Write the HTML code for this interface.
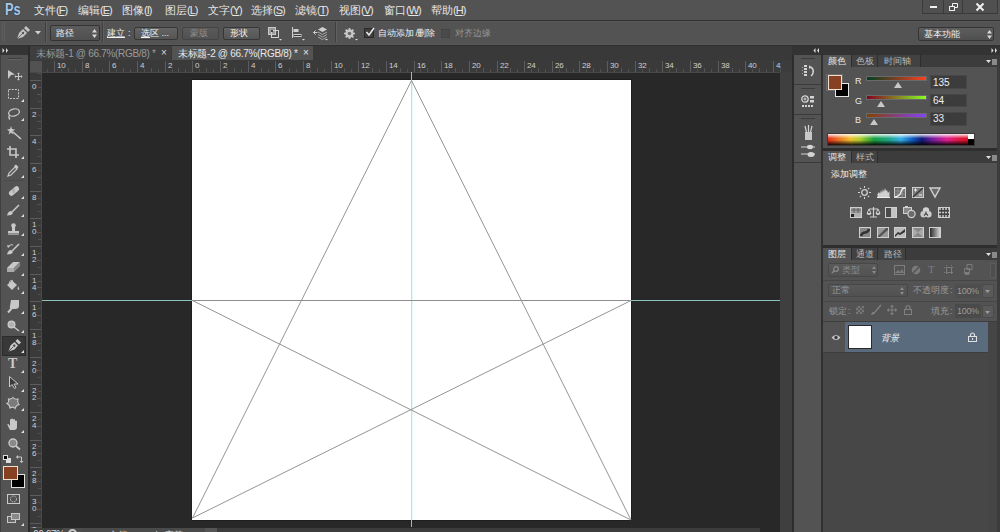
<!DOCTYPE html>
<html><head><meta charset="utf-8">
<style>
*{margin:0;padding:0;box-sizing:border-box}
html,body{width:1000px;height:532px;overflow:hidden;background:#535353;font-family:"Liberation Sans",sans-serif;color:#ddd}
.a{position:absolute}
.t{position:absolute;white-space:nowrap;font-size:11px;line-height:12px}
.m{position:absolute;white-space:nowrap;font-size:11px;line-height:12px;top:4px;color:#e6e6e6}
.o{position:absolute;white-space:nowrap;font-size:9px;line-height:12px;top:27px}
.p{position:absolute;white-space:nowrap;font-size:9px;line-height:12px}
.m i{font-style:normal;letter-spacing:-1px}
svg{position:absolute;overflow:visible}
.rl{font-size:8px;line-height:8px;color:#d0d0d0;letter-spacing:-0.3px}
.rv{font-size:8px;line-height:7px;color:#d0d0d0}
</style></head><body>
<!-- ============ MENU BAR ============ -->
<div class="a" style="left:0;top:0;width:1000px;height:19px;background:#535353"></div>
<div class="a" style="left:0;top:20px;width:1000px;height:1px;background:#303030"></div>
<div class="a" style="left:0;top:21px;width:1000px;height:1px;background:#5a5a5a"></div>
<div class="t" style="left:5px;top:2px;font-size:16px;line-height:16px;font-weight:bold;color:#aac8e6;transform:scaleX(0.8);transform-origin:0 0;text-shadow:0 0 1px #1d3550,0 0 1px #1d3550">Ps</div>
<div class="m" style="left:34px">文件<i>(<u>F</u>)</i></div>
<div class="m" style="left:78px">编辑<i>(<u>E</u>)</i></div>
<div class="m" style="left:122px">图像<i>(<u>I</u>)</i></div>
<div class="m" style="left:165px">图层<i>(<u>L</u>)</i></div>
<div class="m" style="left:208px">文字<i>(<u>Y</u>)</i></div>
<div class="m" style="left:251px">选择<i>(<u>S</u>)</i></div>
<div class="m" style="left:295px">滤镜<i>(<u>T</u>)</i></div>
<div class="m" style="left:339px">视图<i>(<u>V</u>)</i></div>
<div class="m" style="left:384px">窗口<i>(<u>W</u>)</i></div>
<div class="m" style="left:431px">帮助<i>(<u>H</u>)</i></div>
<!-- window controls -->
<div class="a" style="left:922px;top:0;width:76px;height:14px;background:#505050;border:1px solid #3a3a3a;border-top:0"></div>
<div class="a" style="left:943px;top:0;width:1px;height:13px;background:#3a3a3a"></div>
<div class="a" style="left:962px;top:0;width:1px;height:13px;background:#3a3a3a"></div>
<div class="a" style="left:930px;top:6px;width:7px;height:2px;background:#f0f0f0"></div>
<svg style="left:949px;top:3px" width="10" height="9"><path d="M3.5 0.5h5v4h-5z M0.5 3.5h5v4h-5z" fill="none" stroke="#f0f0f0" stroke-width="1"/><rect x="1" y="4" width="4" height="3" fill="#505050"/><path d="M0.5 3.5h5v4h-5z" fill="none" stroke="#f0f0f0"/></svg>
<svg style="left:976px;top:3px" width="8" height="8"><path d="M0.5 0.5L7.5 7.5M7.5 0.5L0.5 7.5" stroke="#f0f0f0" stroke-width="2"/></svg>

<!-- ============ OPTIONS BAR ============ -->
<div class="a" style="left:0;top:22px;width:1000px;height:23px;background:#535353"></div>
<div class="a" style="left:0;top:44px;width:1000px;height:1px;background:#585858"></div>
<div class="a" style="left:0;top:45px;width:1000px;height:1px;background:#2e2e2e"></div>
<div class="a" style="left:2px;top:23px;width:1px;height:18px;background:#5e5e5e"></div>
<div class="a" style="left:4px;top:23px;width:1px;height:18px;background:#5e5e5e"></div>
<!-- pen icon -->
<svg style="left:16px;top:26px" width="14" height="14" viewBox="0 0 14 14"><path d="M1 13 L3 7 L7 3 L11 7 L7 11 Z" fill="#c4c4c4"/><path d="M8 2 L10 0 L14 4 L12 6 Z" fill="#c4c4c4"/><circle cx="7" cy="7" r="1.2" fill="#535353"/><path d="M1 13 L6 8" stroke="#535353" stroke-width="0.8"/></svg>
<svg style="left:35px;top:31px" width="6" height="4"><path d="M0 0H6L3 3.5Z" fill="#d0d0d0"/></svg>
<div class="a" style="left:45px;top:22px;width:1px;height:20px;background:#3e3e3e"></div>
<div class="a" style="left:46px;top:22px;width:1px;height:20px;background:#606060"></div>
<!-- dropdown 路径 -->
<div class="a" style="left:50px;top:25px;width:50px;height:16px;background:linear-gradient(#5c5c5c,#4f4f4f);border:1px solid #333;border-radius:2px"></div>
<div class="o" style="left:56px;top:27px;color:#f0f0f0">路径</div>
<svg style="left:92px;top:29px" width="5" height="9"><path d="M0 3.5L2.5 0L5 3.5Z M0 5.5L2.5 9L5 5.5Z" fill="#d8d8d8"/></svg>
<div class="a" style="left:102px;top:22px;width:1px;height:20px;background:#3e3e3e"></div>
<div class="a" style="left:103px;top:22px;width:1px;height:20px;background:#606060"></div>
<div class="o" style="left:107px;top:27px;color:#f0f0f0"><u>建立</u><span style="margin-left:3px">:</span></div>
<div class="a" style="left:134px;top:27px;width:44px;height:13px;background:linear-gradient(#646464,#555);border:1px solid #363636;border-radius:2px"></div>
<div class="o" style="left:141px;top:27px;color:#f0f0f0"><u>选</u>区 ...</div>
<div class="a" style="left:182px;top:27px;width:37px;height:13px;background:linear-gradient(#5a5a5a,#505050);border:1px solid #444;border-radius:2px"></div>
<div class="o" style="left:190px;top:27px;color:#8e8e8e">蒙版</div>
<div class="a" style="left:223px;top:27px;width:37px;height:13px;background:linear-gradient(#646464,#555);border:1px solid #363636;border-radius:2px"></div>
<div class="o" style="left:230px;top:27px;color:#f0f0f0">形状</div>
<!-- path ops icons -->
<svg style="left:268px;top:27px" width="14" height="14"><rect x="0.5" y="0.5" width="7" height="7" fill="#9a9a9a" stroke="#c8c8c8"/><rect x="3.5" y="3.5" width="7" height="7" fill="none" stroke="#d0d0d0"/><rect x="3" y="3" width="2" height="2" fill="#444"/><path d="M11 12h3l-1.5 1.5z" fill="#ddd"/></svg>
<svg style="left:291px;top:27px" width="14" height="14"><path d="M1.5 0v11" stroke="#cfcfcf"/><rect x="2.5" y="2" width="5" height="3" fill="#cfcfcf"/><rect x="2.5" y="7" width="8" height="3" fill="#cfcfcf"/><path d="M3 8.5h7" stroke="#333"/><path d="M11 12h3l-1.5 1.5z" fill="#ddd"/></svg>
<svg style="left:313px;top:26px" width="15" height="15"><path d="M9.5 1L14 3.5L9.5 6L5 3.5Z" fill="#cfcfcf"/><path d="M5 6L9.5 8.5L14 6M5 8.5L9.5 11L14 8.5M5 11L9.5 13.5L14 11" stroke="#a8a8a8" fill="none"/><path d="M0.5 6.5h4M2.5 4.5l-2 2 2 2" stroke="#d0d0d0" fill="none"/><path d="M12 13h3l-1.5 1.5z" fill="#ddd"/></svg>
<div class="a" style="left:335px;top:22px;width:1px;height:20px;background:#3e3e3e"></div>
<div class="a" style="left:336px;top:22px;width:1px;height:20px;background:#606060"></div>
<!-- gear -->
<svg style="left:344px;top:28px" width="14" height="13" viewBox="0 0 14 13"><circle cx="5.5" cy="5.5" r="4.2" fill="#c8c8c8"/><path d="M5.5 0v11M0 5.5h11M1.6 1.6l7.8 7.8M9.4 1.6l-7.8 7.8" stroke="#c8c8c8" stroke-width="1.6"/><circle cx="5.5" cy="5.5" r="1.8" fill="#6a6a6a"/><path d="M11 11h3l-1.5 1.5z" fill="#ddd"/></svg>
<!-- checkbox checked -->
<div class="a" style="left:364px;top:28px;width:10px;height:10px;background:#3e3e3e;border:1px solid #2a2a2a"></div>
<svg style="left:365px;top:27px" width="10" height="10"><path d="M1.5 5L4 8L9 1" stroke="#e8e8e8" stroke-width="1.6" fill="none"/></svg>
<div class="o" style="left:378px;top:27px;color:#f0f0f0">自动添加<span style="letter-spacing:-1px"> /</span>删除</div>
<div class="a" style="left:441px;top:29px;width:9px;height:9px;background:#4a4a4a;border:1px solid #444"></div>
<div class="o" style="left:455px;top:27px;color:#969696">对齐边缘</div>
<!-- workspace dropdown -->
<div class="a" style="left:918px;top:27px;width:76px;height:14px;background:linear-gradient(#5e5e5e,#4f4f4f);border:1px solid #343434;border-radius:2px"></div>
<div class="o" style="left:924px;top:28px;color:#f0f0f0">基本功能</div>
<svg style="left:987px;top:30px" width="5" height="9"><path d="M0 3.5L2.5 0L5 3.5Z M0 5.5L2.5 9L5 5.5Z" fill="#d8d8d8"/></svg>

<!-- ============ ROW 45..60 ============ -->
<div class="a" style="left:0;top:46px;width:1000px;height:14px;background:#393939"></div>

<!-- ============ TOOLBAR ============ -->
<div class="a" style="left:0;top:46px;width:28px;height:9px;background:#343434"></div>
<svg style="left:2px;top:48px" width="7" height="5"><path d="M0.5 0L2.5 2.5L0.5 5Z M4 0L6 2.5L4 5Z" fill="#e0e0e0"/></svg>
<div class="a" style="left:0;top:55px;width:28px;height:477px;background:#535353;border-left:1px solid #404040"></div>
<div class="a" style="left:28px;top:46px;width:2px;height:486px;background:#2b2b2b"></div>
<div class="a" style="left:8px;top:58px;width:14px;height:1px;background:#3c3c3c"></div>
<div class="a" style="left:8px;top:59px;width:14px;height:1px;background:#656565"></div>
<svg style="left:8px;top:70px" width="15" height="10" viewBox="0 0 15 10"><path d="M0 0L7 4.5L3 5L0 9Z" fill="#c8c8c8"/><path d="M7 6.5h7M10.5 3v7" stroke="#c8c8c8"/><path d="M10.5 2.5l-1.5 1.5h3zM10.5 10.5l-1.5-1.5h3zM6.5 6.5l1.5-1.5v3zM14.5 6.5l-1.5-1.5v3z" fill="#c8c8c8"/></svg>
<svg style="left:8px;top:89px" width="11" height="10" viewBox="0 0 11 10"><rect x="0.5" y="0.5" width="10" height="9" fill="none" stroke="#c8c8c8" stroke-dasharray="2 1.2"/></svg>
<svg style="left:21px;top:99px" width="3" height="3"><path d="M3 0V3H0Z" fill="#e0e0e0"/></svg>
<svg style="left:7px;top:108px" width="13" height="12" viewBox="0 0 13 12"><ellipse cx="7" cy="4.5" rx="5.5" ry="3.5" fill="none" stroke="#c8c8c8" stroke-width="1.3" transform="rotate(-15 7 4.5)"/><path d="M2.5 7Q1 10 3 11.5" stroke="#c8c8c8" fill="none" stroke-width="1.2"/></svg>
<svg style="left:21px;top:118px" width="3" height="3"><path d="M3 0V3H0Z" fill="#e0e0e0"/></svg>
<svg style="left:7px;top:126px" width="16" height="14" viewBox="0 0 16 14"><path d="M4 0L5 3L8 3.5L5.5 5.5L6.5 8.5L4 6.8L1.5 8.5L2.5 5.5L0 3.5L3 3Z" fill="#c8c8c8"/><path d="M6 6L14 13" stroke="#c8c8c8" stroke-width="1.6"/></svg>
<svg style="left:7px;top:146px" width="13" height="12" viewBox="0 0 13 12"><path d="M3 0V9H12M0 3H9V12" stroke="#c8c8c8" stroke-width="1.6" fill="none"/></svg>
<svg style="left:21px;top:156px" width="3" height="3"><path d="M3 0V3H0Z" fill="#e0e0e0"/></svg>
<svg style="left:7px;top:164px" width="12" height="13" viewBox="0 0 12 13"><path d="M1 12L2 9L8 3L10 5L4 11Z" fill="none" stroke="#c8c8c8" stroke-width="1.2"/><path d="M7 2L9 0.5L11.5 3L10 5Z" fill="#c8c8c8"/></svg>
<svg style="left:21px;top:175px" width="3" height="3"><path d="M3 0V3H0Z" fill="#e0e0e0"/></svg>
<div class="a" style="left:4px;top:180px;width:21px;height:1px;background:#4a4a4a"></div>
<svg style="left:7px;top:185px" width="13" height="12" viewBox="0 0 13 12"><rect x="1" y="3.5" width="12" height="5" rx="2.5" fill="#c8c8c8" transform="rotate(-40 7 6)"/><path d="M5 5h3M5 7h3" stroke="#888" stroke-width="0.8"/></svg>
<svg style="left:21px;top:196px" width="3" height="3"><path d="M3 0V3H0Z" fill="#e0e0e0"/></svg>
<svg style="left:7px;top:204px" width="13" height="12" viewBox="0 0 13 12"><path d="M5 8L12 1" stroke="#c8c8c8" stroke-width="1.6"/><path d="M0 11.5Q1 7 4 7L6 9Q5 11.5 0 11.5Z" fill="#c8c8c8"/></svg>
<svg style="left:21px;top:214px" width="3" height="3"><path d="M3 0V3H0Z" fill="#e0e0e0"/></svg>
<svg style="left:7px;top:223px" width="13" height="12" viewBox="0 0 13 12"><circle cx="6.5" cy="2.5" r="2.3" fill="#c8c8c8"/><rect x="5" y="4" width="3" height="4" fill="#c8c8c8"/><rect x="1" y="8" width="11" height="2.5" fill="#c8c8c8"/><rect x="1" y="11" width="11" height="1" fill="#999"/></svg>
<svg style="left:21px;top:233px" width="3" height="3"><path d="M3 0V3H0Z" fill="#e0e0e0"/></svg>
<svg style="left:7px;top:243px" width="13" height="12" viewBox="0 0 13 12"><path d="M5 8L12 1" stroke="#c8c8c8" stroke-width="1.6"/><path d="M0 11.5Q1 7 4 7L6 9Q5 11.5 0 11.5Z" fill="#c8c8c8"/><path d="M1 4Q3 1 6 2" stroke="#c8c8c8" fill="none" stroke-width="1.2"/><path d="M0 2L1 5L3 3Z" fill="#c8c8c8"/></svg>
<svg style="left:21px;top:253px" width="3" height="3"><path d="M3 0V3H0Z" fill="#e0e0e0"/></svg>
<svg style="left:7px;top:262px" width="13" height="11" viewBox="0 0 13 11"><path d="M0 6L6 0H13L7 6Z" fill="#c8c8c8"/><path d="M0 6H7V10H0Z" fill="#aaa"/><path d="M7 6L13 0V4L7 10Z" fill="#8a8a8a"/></svg>
<svg style="left:21px;top:273px" width="3" height="3"><path d="M3 0V3H0Z" fill="#e0e0e0"/></svg>
<svg style="left:6px;top:280px" width="16" height="12" viewBox="0 0 16 12"><path d="M1 5L6 0.5L11 5L6 10Z" fill="#c8c8c8"/><path d="M3.5 3Q4 -1 7 1" stroke="#c8c8c8" fill="none"/><path d="M12 6Q14 9 12.5 10Q11 9 12 6Z" fill="#c8c8c8"/></svg>
<svg style="left:21px;top:291px" width="3" height="3"><path d="M3 0V3H0Z" fill="#e0e0e0"/></svg>
<svg style="left:7px;top:300px" width="13" height="13" viewBox="0 0 13 13"><path d="M4 0H12V6Q12 9 8 9H5Q2 9 3 6Z" fill="#c8c8c8"/><path d="M5 8L1 12.5" stroke="#c8c8c8" stroke-width="2"/></svg>
<svg style="left:21px;top:311px" width="3" height="3"><path d="M3 0V3H0Z" fill="#e0e0e0"/></svg>
<svg style="left:7px;top:320px" width="14" height="12" viewBox="0 0 14 12"><circle cx="4.5" cy="4.5" r="4" fill="#c8c8c8"/><circle cx="4.5" cy="4.5" r="2.5" fill="#b0b0b0"/><path d="M7 7L12 11" stroke="#c8c8c8" stroke-width="1.5"/></svg>
<svg style="left:21px;top:330px" width="3" height="3"><path d="M3 0V3H0Z" fill="#e0e0e0"/></svg>
<div class="a" style="left:2px;top:336px;width:24px;height:20px;background:#383838;border:1px solid #2c2c2c"></div>
<svg style="left:8px;top:339px" width="13" height="13" viewBox="0 0 13 13"><path d="M0.5 12.5L2.5 6.5L6.5 3L10 6.5L6.5 10.5Z" fill="#c8c8c8"/><path d="M7.5 2L9.5 0L13 3.5L11 5.5Z" fill="#c8c8c8"/><circle cx="6.3" cy="6.7" r="1.1" fill="#383838"/><path d="M0.8 12.2L5.5 7.5" stroke="#383838" stroke-width="0.8"/></svg>
<svg style="left:21px;top:350px" width="3" height="3"><path d="M3 0V3H0Z" fill="#e0e0e0"/></svg>
<div class="t" style="left:8px;top:357px;font-size:14px;line-height:14px;color:#c8c8c8;font-family:'Liberation Serif',serif;font-weight:bold">T</div>
<svg style="left:21px;top:370px" width="3" height="3"><path d="M3 0V3H0Z" fill="#e0e0e0"/></svg>
<svg style="left:9px;top:376px" width="10" height="13" viewBox="0 0 10 13"><path d="M0.5 0.5V11L3 8.5L5.5 12.5L7 11.5L5 8H9Z" fill="#3a3a3a" stroke="#c8c8c8"/></svg>
<svg style="left:21px;top:389px" width="3" height="3"><path d="M3 0V3H0Z" fill="#e0e0e0"/></svg>
<svg style="left:6px;top:397px" width="14" height="12" viewBox="0 0 14 12"><path d="M7 0.5Q9 3 12 2Q11 5 13 7.5Q10 8 9 11.5Q7 9 4 11Q4 8 1 6.5Q3.5 5 2.5 2Q5.5 2.5 7 0.5Z" fill="#7a7a7a" stroke="#c8c8c8" stroke-width="1.1"/></svg>
<svg style="left:21px;top:408px" width="3" height="3"><path d="M3 0V3H0Z" fill="#e0e0e0"/></svg>
<svg style="left:7px;top:418px" width="13" height="13" viewBox="0 0 13 13"><path d="M3 12L0.5 7Q0 5.5 1.5 6L3 8V2Q3 1 4 1.2V6V1Q5 -0.2 6 1V6V1.5Q7 0.5 8 1.5V6.5V3Q9 2 10 3V9Q10 12 7 12Z" fill="#c8c8c8"/></svg>
<svg style="left:21px;top:430px" width="3" height="3"><path d="M3 0V3H0Z" fill="#e0e0e0"/></svg>
<svg style="left:8px;top:438px" width="13" height="12" viewBox="0 0 13 12"><circle cx="5" cy="5" r="4" fill="#8a8a8a" stroke="#c8c8c8" stroke-width="1.4"/><path d="M8 8L12 11.5" stroke="#c8c8c8" stroke-width="1.8"/></svg>
<svg style="left:3px;top:455px" width="8" height="8" viewBox="0 0 8 8"><rect x="3" y="3" width="5" height="5" fill="#ddd"/><rect x="0.5" y="0.5" width="4" height="4" fill="#000" stroke="#ddd"/></svg>
<svg style="left:16px;top:455px" width="8" height="8" viewBox="0 0 8 8"><path d="M1 2H5.5V6.5" stroke="#c8c8c8" fill="none"/><path d="M0 2L2 0V4ZM5.5 8L3.5 6H7.5Z" fill="#c8c8c8"/></svg>
<div class="a" style="left:11px;top:474px;width:14px;height:14px;background:#000;border:1px solid #e0e0e0"></div>
<div class="a" style="left:3px;top:466px;width:15px;height:14px;background:#874021;border:1px solid #f0e0d0"></div>
<svg style="left:7px;top:494px" width="13" height="10" viewBox="0 0 13 10"><rect x="0.5" y="0.5" width="12" height="9" fill="none" stroke="#c8c8c8"/><circle cx="6.5" cy="5" r="3" fill="none" stroke="#c8c8c8" stroke-dasharray="1.5 1"/></svg>
<svg style="left:7px;top:513px" width="14" height="10" viewBox="0 0 14 10"><rect x="0.5" y="3.5" width="8" height="6" fill="#666" stroke="#c8c8c8"/><rect x="4.5" y="0.5" width="8" height="6" fill="#888" stroke="#c8c8c8"/></svg>
<svg style="left:21px;top:523px" width="3" height="3"><path d="M3 0V3H0Z" fill="#e0e0e0"/></svg>

<!-- ============ DOC TABS ============ -->
<div class="a" style="left:30px;top:46px;width:141px;height:14px;background:#3e3e3e"></div>
<div class="t" style="left:36px;top:48px;color:#9a9a9a;font-size:10px;letter-spacing:-0.3px">未标题-1 @ 66.7%(RGB/8) *</div>
<div class="t" style="left:161px;top:47px;color:#d8d8d8;font-size:10px">×</div>
<div class="a" style="left:172px;top:46px;width:141px;height:14px;background:#535353"></div>
<div class="t" style="left:178px;top:48px;color:#e8e8e8;font-size:10px;letter-spacing:-0.3px">未标题-2 @ 66.7%(RGB/8) *</div>
<div class="t" style="left:303px;top:47px;color:#e8e8e8;font-size:10px">×</div>

<!-- ============ RULERS ============ -->
<div class="a" style="left:30px;top:60px;width:751px;height:12px;background:#3a3a3a"></div>
<div class="a" style="left:30px;top:60px;width:12px;height:467px;background:#3a3a3a"></div>
<div class="a" style="left:30px;top:61px;width:12px;height:11px;background:#525252"></div>
<svg style="left:0;top:0" width="1000" height="532"><line x1="47.5" y1="69" x2="47.5" y2="72" stroke="#505050"/><line x1="54.5" y1="61" x2="54.5" y2="72" stroke="#5c5c5c"/><line x1="61.5" y1="69" x2="61.5" y2="72" stroke="#505050"/><line x1="68.5" y1="68" x2="68.5" y2="72" stroke="#555555"/><line x1="75.5" y1="69" x2="75.5" y2="72" stroke="#505050"/><line x1="82.5" y1="61" x2="82.5" y2="72" stroke="#5c5c5c"/><line x1="89.5" y1="69" x2="89.5" y2="72" stroke="#505050"/><line x1="95.5" y1="68" x2="95.5" y2="72" stroke="#555555"/><line x1="102.5" y1="69" x2="102.5" y2="72" stroke="#505050"/><line x1="109.5" y1="61" x2="109.5" y2="72" stroke="#5c5c5c"/><line x1="116.5" y1="69" x2="116.5" y2="72" stroke="#505050"/><line x1="123.5" y1="68" x2="123.5" y2="72" stroke="#555555"/><line x1="130.5" y1="69" x2="130.5" y2="72" stroke="#505050"/><line x1="137.5" y1="61" x2="137.5" y2="72" stroke="#5c5c5c"/><line x1="144.5" y1="69" x2="144.5" y2="72" stroke="#505050"/><line x1="151.5" y1="68" x2="151.5" y2="72" stroke="#555555"/><line x1="158.5" y1="69" x2="158.5" y2="72" stroke="#505050"/><line x1="165.5" y1="61" x2="165.5" y2="72" stroke="#5c5c5c"/><line x1="172.5" y1="69" x2="172.5" y2="72" stroke="#505050"/><line x1="178.5" y1="68" x2="178.5" y2="72" stroke="#555555"/><line x1="185.5" y1="69" x2="185.5" y2="72" stroke="#505050"/><line x1="192.5" y1="61" x2="192.5" y2="72" stroke="#5c5c5c"/><line x1="199.5" y1="69" x2="199.5" y2="72" stroke="#505050"/><line x1="206.5" y1="68" x2="206.5" y2="72" stroke="#555555"/><line x1="213.5" y1="69" x2="213.5" y2="72" stroke="#505050"/><line x1="220.5" y1="61" x2="220.5" y2="72" stroke="#5c5c5c"/><line x1="227.5" y1="69" x2="227.5" y2="72" stroke="#505050"/><line x1="234.5" y1="68" x2="234.5" y2="72" stroke="#555555"/><line x1="241.5" y1="69" x2="241.5" y2="72" stroke="#505050"/><line x1="248.5" y1="61" x2="248.5" y2="72" stroke="#5c5c5c"/><line x1="254.5" y1="69" x2="254.5" y2="72" stroke="#505050"/><line x1="261.5" y1="68" x2="261.5" y2="72" stroke="#555555"/><line x1="268.5" y1="69" x2="268.5" y2="72" stroke="#505050"/><line x1="275.5" y1="61" x2="275.5" y2="72" stroke="#5c5c5c"/><line x1="282.5" y1="69" x2="282.5" y2="72" stroke="#505050"/><line x1="289.5" y1="68" x2="289.5" y2="72" stroke="#555555"/><line x1="296.5" y1="69" x2="296.5" y2="72" stroke="#505050"/><line x1="303.5" y1="61" x2="303.5" y2="72" stroke="#5c5c5c"/><line x1="310.5" y1="69" x2="310.5" y2="72" stroke="#505050"/><line x1="317.5" y1="68" x2="317.5" y2="72" stroke="#555555"/><line x1="324.5" y1="69" x2="324.5" y2="72" stroke="#505050"/><line x1="331.5" y1="61" x2="331.5" y2="72" stroke="#5c5c5c"/><line x1="337.5" y1="69" x2="337.5" y2="72" stroke="#505050"/><line x1="344.5" y1="68" x2="344.5" y2="72" stroke="#555555"/><line x1="351.5" y1="69" x2="351.5" y2="72" stroke="#505050"/><line x1="358.5" y1="61" x2="358.5" y2="72" stroke="#5c5c5c"/><line x1="365.5" y1="69" x2="365.5" y2="72" stroke="#505050"/><line x1="372.5" y1="68" x2="372.5" y2="72" stroke="#555555"/><line x1="379.5" y1="69" x2="379.5" y2="72" stroke="#505050"/><line x1="386.5" y1="61" x2="386.5" y2="72" stroke="#5c5c5c"/><line x1="393.5" y1="69" x2="393.5" y2="72" stroke="#505050"/><line x1="400.5" y1="68" x2="400.5" y2="72" stroke="#555555"/><line x1="407.5" y1="69" x2="407.5" y2="72" stroke="#505050"/><line x1="414.5" y1="61" x2="414.5" y2="72" stroke="#5c5c5c"/><line x1="420.5" y1="69" x2="420.5" y2="72" stroke="#505050"/><line x1="427.5" y1="68" x2="427.5" y2="72" stroke="#555555"/><line x1="434.5" y1="69" x2="434.5" y2="72" stroke="#505050"/><line x1="441.5" y1="61" x2="441.5" y2="72" stroke="#5c5c5c"/><line x1="448.5" y1="69" x2="448.5" y2="72" stroke="#505050"/><line x1="455.5" y1="68" x2="455.5" y2="72" stroke="#555555"/><line x1="462.5" y1="69" x2="462.5" y2="72" stroke="#505050"/><line x1="469.5" y1="61" x2="469.5" y2="72" stroke="#5c5c5c"/><line x1="476.5" y1="69" x2="476.5" y2="72" stroke="#505050"/><line x1="483.5" y1="68" x2="483.5" y2="72" stroke="#555555"/><line x1="490.5" y1="69" x2="490.5" y2="72" stroke="#505050"/><line x1="497.5" y1="61" x2="497.5" y2="72" stroke="#5c5c5c"/><line x1="503.5" y1="69" x2="503.5" y2="72" stroke="#505050"/><line x1="510.5" y1="68" x2="510.5" y2="72" stroke="#555555"/><line x1="517.5" y1="69" x2="517.5" y2="72" stroke="#505050"/><line x1="524.5" y1="61" x2="524.5" y2="72" stroke="#5c5c5c"/><line x1="531.5" y1="69" x2="531.5" y2="72" stroke="#505050"/><line x1="538.5" y1="68" x2="538.5" y2="72" stroke="#555555"/><line x1="545.5" y1="69" x2="545.5" y2="72" stroke="#505050"/><line x1="552.5" y1="61" x2="552.5" y2="72" stroke="#5c5c5c"/><line x1="559.5" y1="69" x2="559.5" y2="72" stroke="#505050"/><line x1="566.5" y1="68" x2="566.5" y2="72" stroke="#555555"/><line x1="573.5" y1="69" x2="573.5" y2="72" stroke="#505050"/><line x1="579.5" y1="61" x2="579.5" y2="72" stroke="#5c5c5c"/><line x1="586.5" y1="69" x2="586.5" y2="72" stroke="#505050"/><line x1="593.5" y1="68" x2="593.5" y2="72" stroke="#555555"/><line x1="600.5" y1="69" x2="600.5" y2="72" stroke="#505050"/><line x1="607.5" y1="61" x2="607.5" y2="72" stroke="#5c5c5c"/><line x1="614.5" y1="69" x2="614.5" y2="72" stroke="#505050"/><line x1="621.5" y1="68" x2="621.5" y2="72" stroke="#555555"/><line x1="628.5" y1="69" x2="628.5" y2="72" stroke="#505050"/><line x1="635.5" y1="61" x2="635.5" y2="72" stroke="#5c5c5c"/><line x1="642.5" y1="69" x2="642.5" y2="72" stroke="#505050"/><line x1="649.5" y1="68" x2="649.5" y2="72" stroke="#555555"/><line x1="656.5" y1="69" x2="656.5" y2="72" stroke="#505050"/><line x1="662.5" y1="61" x2="662.5" y2="72" stroke="#5c5c5c"/><line x1="669.5" y1="69" x2="669.5" y2="72" stroke="#505050"/><line x1="676.5" y1="68" x2="676.5" y2="72" stroke="#555555"/><line x1="683.5" y1="69" x2="683.5" y2="72" stroke="#505050"/><line x1="690.5" y1="61" x2="690.5" y2="72" stroke="#5c5c5c"/><line x1="697.5" y1="69" x2="697.5" y2="72" stroke="#505050"/><line x1="704.5" y1="68" x2="704.5" y2="72" stroke="#555555"/><line x1="711.5" y1="69" x2="711.5" y2="72" stroke="#505050"/><line x1="718.5" y1="61" x2="718.5" y2="72" stroke="#5c5c5c"/><line x1="725.5" y1="69" x2="725.5" y2="72" stroke="#505050"/><line x1="732.5" y1="68" x2="732.5" y2="72" stroke="#555555"/><line x1="739.5" y1="69" x2="739.5" y2="72" stroke="#505050"/><line x1="745.5" y1="61" x2="745.5" y2="72" stroke="#5c5c5c"/><line x1="752.5" y1="69" x2="752.5" y2="72" stroke="#505050"/><line x1="759.5" y1="68" x2="759.5" y2="72" stroke="#555555"/><line x1="766.5" y1="69" x2="766.5" y2="72" stroke="#505050"/><line x1="773.5" y1="61" x2="773.5" y2="72" stroke="#5c5c5c"/><line x1="780.5" y1="69" x2="780.5" y2="72" stroke="#505050"/><line x1="38" y1="73.5" x2="42" y2="73.5" stroke="#505050"/><line x1="30" y1="80.5" x2="42" y2="80.5" stroke="#5c5c5c"/><line x1="38" y1="87.5" x2="42" y2="87.5" stroke="#505050"/><line x1="37" y1="94.5" x2="42" y2="94.5" stroke="#555555"/><line x1="38" y1="101.5" x2="42" y2="101.5" stroke="#505050"/><line x1="30" y1="108.5" x2="42" y2="108.5" stroke="#5c5c5c"/><line x1="38" y1="115.5" x2="42" y2="115.5" stroke="#505050"/><line x1="37" y1="121.5" x2="42" y2="121.5" stroke="#555555"/><line x1="38" y1="128.5" x2="42" y2="128.5" stroke="#505050"/><line x1="30" y1="135.5" x2="42" y2="135.5" stroke="#5c5c5c"/><line x1="38" y1="142.5" x2="42" y2="142.5" stroke="#505050"/><line x1="37" y1="149.5" x2="42" y2="149.5" stroke="#555555"/><line x1="38" y1="156.5" x2="42" y2="156.5" stroke="#505050"/><line x1="30" y1="163.5" x2="42" y2="163.5" stroke="#5c5c5c"/><line x1="38" y1="170.5" x2="42" y2="170.5" stroke="#505050"/><line x1="37" y1="177.5" x2="42" y2="177.5" stroke="#555555"/><line x1="38" y1="184.5" x2="42" y2="184.5" stroke="#505050"/><line x1="30" y1="191.5" x2="42" y2="191.5" stroke="#5c5c5c"/><line x1="38" y1="198.5" x2="42" y2="198.5" stroke="#505050"/><line x1="37" y1="204.5" x2="42" y2="204.5" stroke="#555555"/><line x1="38" y1="211.5" x2="42" y2="211.5" stroke="#505050"/><line x1="30" y1="218.5" x2="42" y2="218.5" stroke="#5c5c5c"/><line x1="38" y1="225.5" x2="42" y2="225.5" stroke="#505050"/><line x1="37" y1="232.5" x2="42" y2="232.5" stroke="#555555"/><line x1="38" y1="239.5" x2="42" y2="239.5" stroke="#505050"/><line x1="30" y1="246.5" x2="42" y2="246.5" stroke="#5c5c5c"/><line x1="38" y1="253.5" x2="42" y2="253.5" stroke="#505050"/><line x1="37" y1="260.5" x2="42" y2="260.5" stroke="#555555"/><line x1="38" y1="267.5" x2="42" y2="267.5" stroke="#505050"/><line x1="30" y1="274.5" x2="42" y2="274.5" stroke="#5c5c5c"/><line x1="38" y1="281.5" x2="42" y2="281.5" stroke="#505050"/><line x1="37" y1="287.5" x2="42" y2="287.5" stroke="#555555"/><line x1="38" y1="294.5" x2="42" y2="294.5" stroke="#505050"/><line x1="30" y1="301.5" x2="42" y2="301.5" stroke="#5c5c5c"/><line x1="38" y1="308.5" x2="42" y2="308.5" stroke="#505050"/><line x1="37" y1="315.5" x2="42" y2="315.5" stroke="#555555"/><line x1="38" y1="322.5" x2="42" y2="322.5" stroke="#505050"/><line x1="30" y1="329.5" x2="42" y2="329.5" stroke="#5c5c5c"/><line x1="38" y1="336.5" x2="42" y2="336.5" stroke="#505050"/><line x1="37" y1="343.5" x2="42" y2="343.5" stroke="#555555"/><line x1="38" y1="350.5" x2="42" y2="350.5" stroke="#505050"/><line x1="30" y1="357.5" x2="42" y2="357.5" stroke="#5c5c5c"/><line x1="38" y1="364.5" x2="42" y2="364.5" stroke="#505050"/><line x1="37" y1="370.5" x2="42" y2="370.5" stroke="#555555"/><line x1="38" y1="377.5" x2="42" y2="377.5" stroke="#505050"/><line x1="30" y1="384.5" x2="42" y2="384.5" stroke="#5c5c5c"/><line x1="38" y1="391.5" x2="42" y2="391.5" stroke="#505050"/><line x1="37" y1="398.5" x2="42" y2="398.5" stroke="#555555"/><line x1="38" y1="405.5" x2="42" y2="405.5" stroke="#505050"/><line x1="30" y1="412.5" x2="42" y2="412.5" stroke="#5c5c5c"/><line x1="38" y1="419.5" x2="42" y2="419.5" stroke="#505050"/><line x1="37" y1="426.5" x2="42" y2="426.5" stroke="#555555"/><line x1="38" y1="433.5" x2="42" y2="433.5" stroke="#505050"/><line x1="30" y1="440.5" x2="42" y2="440.5" stroke="#5c5c5c"/><line x1="38" y1="446.5" x2="42" y2="446.5" stroke="#505050"/><line x1="37" y1="453.5" x2="42" y2="453.5" stroke="#555555"/><line x1="38" y1="460.5" x2="42" y2="460.5" stroke="#505050"/><line x1="30" y1="467.5" x2="42" y2="467.5" stroke="#5c5c5c"/><line x1="38" y1="474.5" x2="42" y2="474.5" stroke="#505050"/><line x1="37" y1="481.5" x2="42" y2="481.5" stroke="#555555"/><line x1="38" y1="488.5" x2="42" y2="488.5" stroke="#505050"/><line x1="30" y1="495.5" x2="42" y2="495.5" stroke="#5c5c5c"/><line x1="38" y1="502.5" x2="42" y2="502.5" stroke="#505050"/><line x1="37" y1="509.5" x2="42" y2="509.5" stroke="#555555"/><line x1="38" y1="516.5" x2="42" y2="516.5" stroke="#505050"/><line x1="30" y1="523.5" x2="42" y2="523.5" stroke="#5c5c5c"/><line x1="30" y1="72.5" x2="781" y2="72.5" stroke="#484848"/><line x1="41.5" y1="72" x2="41.5" y2="528" stroke="#484848"/></svg>
<div class="t rl" style="left:57px;top:62px">10</div>
<div class="t rl" style="left:85px;top:62px">8</div>
<div class="t rl" style="left:112px;top:62px">6</div>
<div class="t rl" style="left:140px;top:62px">4</div>
<div class="t rl" style="left:168px;top:62px">2</div>
<div class="t rl" style="left:195px;top:62px">0</div>
<div class="t rl" style="left:223px;top:62px">2</div>
<div class="t rl" style="left:251px;top:62px">4</div>
<div class="t rl" style="left:278px;top:62px">6</div>
<div class="t rl" style="left:306px;top:62px">8</div>
<div class="t rl" style="left:334px;top:62px">10</div>
<div class="t rl" style="left:361px;top:62px">12</div>
<div class="t rl" style="left:389px;top:62px">14</div>
<div class="t rl" style="left:417px;top:62px">16</div>
<div class="t rl" style="left:444px;top:62px">18</div>
<div class="t rl" style="left:472px;top:62px">20</div>
<div class="t rl" style="left:500px;top:62px">22</div>
<div class="t rl" style="left:527px;top:62px">24</div>
<div class="t rl" style="left:555px;top:62px">26</div>
<div class="t rl" style="left:582px;top:62px">28</div>
<div class="t rl" style="left:610px;top:62px">30</div>
<div class="t rl" style="left:638px;top:62px">32</div>
<div class="t rl" style="left:665px;top:62px">34</div>
<div class="t rl" style="left:693px;top:62px">36</div>
<div class="t rl" style="left:721px;top:62px">38</div>
<div class="t rl" style="left:748px;top:62px">40</div>
<div class="t rl" style="left:776px;top:62px">42</div>
<div class="t rv" style="left:32px;top:83px">0</div>
<div class="t rv" style="left:32px;top:111px">2</div>
<div class="t rv" style="left:32px;top:138px">4</div>
<div class="t rv" style="left:32px;top:166px">6</div>
<div class="t rv" style="left:32px;top:194px">8</div>
<div class="t rv" style="left:32px;top:221px">1<br>0</div>
<div class="t rv" style="left:32px;top:249px">1<br>2</div>
<div class="t rv" style="left:32px;top:277px">1<br>4</div>
<div class="t rv" style="left:32px;top:304px">1<br>6</div>
<div class="t rv" style="left:32px;top:332px">1<br>8</div>
<div class="t rv" style="left:32px;top:360px">2<br>0</div>
<div class="t rv" style="left:32px;top:387px">2<br>2</div>
<div class="t rv" style="left:32px;top:415px">2<br>4</div>
<div class="t rv" style="left:32px;top:443px">2<br>6</div>
<div class="t rv" style="left:32px;top:470px">2<br>8</div>
<div class="t rv" style="left:32px;top:498px">3<br>0</div>
<div class="t rv" style="left:32px;top:526px">3<br>2</div>

<!-- ============ CANVAS ============ -->
<div class="a" style="left:42px;top:73px;width:738px;height:459px;background:#282828"></div>
<div class="a" style="left:192px;top:80px;width:439px;height:440px;background:#ffffff;box-shadow:0 0 0 1px #1e1e1e"></div>
<div class="a" style="left:42px;top:300px;width:150px;height:1px;background:#8cc2be"></div>
<div class="a" style="left:631px;top:300px;width:149px;height:1px;background:#8cc2be"></div>
<div class="a" style="left:411px;top:72px;width:1px;height:8px;background:#8cc2be"></div>
<div class="a" style="left:411px;top:520px;width:1px;height:7px;background:#8cc2be"></div>
<div class="a" style="left:411px;top:80px;width:1px;height:440px;background:#c2e0dc"></div>
<div class="a" style="left:412px;top:80px;width:1px;height:440px;background:#e2f9f7"></div>
<div class="a" style="left:192px;top:300px;width:439px;height:1px;background:#8e8e8e"></div>
<svg style="left:0;top:0" width="1000" height="532">
  <path d="M411.5 80.5L192.5 518M411.5 80.5L631 520M192.5 300.5L631 520M631 300.5L192.5 518" stroke="#959595" stroke-width="1" fill="none"/>
</svg>

<!-- ============ STATUS BAR ============ -->
<div class="a" style="left:30px;top:528px;width:730px;height:4px;background:#3c3c3c"></div>
<div class="t" style="left:33px;top:529px;font-size:10px;color:#d8d8d8;letter-spacing:-0.4px">66.67%</div>
<div class="a" style="left:63px;top:528px;width:20px;height:4px;background:#4c4c4c"></div>
<div class="a" style="left:68px;top:529px;width:9px;height:9px;border-radius:50%;border:2px solid #c8c8c8"></div>
<div class="a" style="left:83px;top:528px;width:122px;height:4px;background:#4a4a4a"></div>
<div class="t" style="left:109px;top:529px;font-size:9px;color:#e0e0e0">文档:2.38M/0 字节</div>
<div class="a" style="left:205px;top:528px;width:12px;height:4px;background:#555"></div>

<!-- ============ RIGHT DOCK ============ -->
<div class="a" style="left:780px;top:72px;width:12px;height:460px;background:#3f3f3f"></div>
<div class="a" style="left:781px;top:60px;width:11px;height:12px;background:#3c3c3c"></div>
<!-- dock header -->
<div class="a" style="left:792px;top:46px;width:208px;height:9px;background:#333333"></div>
<svg style="left:813px;top:48px" width="7" height="5"><path d="M2.5 0L0.5 2.5L2.5 5Z M6 0L4 2.5L6 5Z" fill="#e0e0e0"/></svg>
<svg style="left:991px;top:48px" width="7" height="5"><path d="M0.5 0L2.5 2.5L0.5 5Z M4 0L6 2.5L4 5Z" fill="#e0e0e0"/></svg>
<div class="a" style="left:792px;top:55px;width:2px;height:477px;background:#2c2c2c"></div>
<!-- icon column -->
<div class="a" style="left:794px;top:55px;width:28px;height:477px;background:#535353"></div>
<div class="a" style="left:794px;top:84px;width:28px;height:1px;background:#3a3a3a"></div>
<div class="a" style="left:794px;top:114px;width:28px;height:1px;background:#3a3a3a"></div>
<div class="a" style="left:794px;top:162px;width:28px;height:1px;background:#3a3a3a"></div>
<div class="a" style="left:801px;top:58px;width:14px;height:1px;background:#3c3c3c"></div>
<div class="a" style="left:801px;top:88px;width:14px;height:1px;background:#3c3c3c"></div>
<div class="a" style="left:801px;top:118px;width:14px;height:1px;background:#3c3c3c"></div>
<!-- history icon -->
<svg style="left:802px;top:65px" width="14" height="14"><rect x="2" y="0" width="3" height="2" fill="#d4d4d4"/><rect x="2" y="3" width="3" height="2" fill="#d4d4d4"/><rect x="2" y="6" width="3" height="2" fill="#d4d4d4"/><rect x="2" y="9" width="3" height="2" fill="#d4d4d4"/><path d="M0 2.5h1M0 5.5h1M0 8.5h1" stroke="#aaa"/><path d="M8 2 Q12 3 11 8 Q10.5 10 9 11" stroke="#d4d4d4" stroke-width="1.5" fill="none"/><path d="M7 0L9 2.2L7 4Z" fill="#d4d4d4"/></svg>
<!-- properties / info icon -->
<svg style="left:801px;top:95px" width="15" height="14"><circle cx="4" cy="4" r="3.2" fill="none" stroke="#d4d4d4" stroke-width="1.3"/><path d="M2.5 4h3M4 2.5v3" stroke="#d4d4d4"/><rect x="9" y="1" width="4" height="2.5" fill="#d4d4d4"/><rect x="9" y="5" width="4" height="2.5" fill="#d4d4d4"/><path d="M1 11h12" stroke="#d4d4d4" stroke-width="2" stroke-dasharray="2 1"/></svg>
<!-- brush presets -->
<svg style="left:802px;top:125px" width="13" height="15"><path d="M3 1L4.5 7M6.5 0L6.5 7M10 1L8.5 7" stroke="#d4d4d4" stroke-width="1.2"/><rect x="3" y="7" width="7" height="8" fill="#c8c8c8"/></svg>
<!-- adjustments slider icon -->
<svg style="left:801px;top:144px" width="15" height="14"><path d="M0 3h14M0 10h14" stroke="#d4d4d4" stroke-width="1.2"/><ellipse cx="9" cy="3" rx="3" ry="2.2" fill="#d4d4d4"/><ellipse cx="10" cy="10.5" rx="3.5" ry="2.5" fill="#d4d4d4"/></svg>
<div class="a" style="left:821px;top:55px;width:2px;height:477px;background:#313131"></div>

<!-- ===== COLOR PANEL ===== -->
<div class="a" style="left:823px;top:55px;width:177px;height:12px;background:#3c3c3c"></div>
<div class="a" style="left:823px;top:55px;width:28px;height:12px;background:#535353"></div>
<div class="a" style="left:851px;top:55px;width:1px;height:12px;background:#2e2e2e"></div>
<div class="a" style="left:877px;top:55px;width:1px;height:12px;background:#2e2e2e"></div>
<div class="a" style="left:920px;top:55px;width:1px;height:12px;background:#2e2e2e"></div>
<div class="a" style="left:852px;top:55px;width:25px;height:12px;background:#424242"></div>
<div class="a" style="left:878px;top:55px;width:42px;height:12px;background:#424242"></div>
<div class="p" style="left:828px;top:55px;color:#e8e8e8">颜色</div>
<div class="p" style="left:856px;top:55px;color:#b8b8b8">色板</div>
<div class="p" style="left:884px;top:55px;color:#b8b8b8">时间轴</div>
<svg style="left:986px;top:59px" width="11" height="6"><path d="M0 1h5L2.5 4Z" fill="#e0e0e0"/><rect x="6" y="0" width="5" height="6" fill="#8a8a8a"/></svg>
<div class="a" style="left:823px;top:67px;width:177px;height:81px;background:#535353"></div>
<!-- swatches -->
<div class="a" style="left:826px;top:74px;width:17px;height:17px;border:1px solid #6a6a6a"></div>
<div class="a" style="left:835px;top:83px;width:14px;height:14px;background:#000;border:1px solid #e8e8e8"></div>
<div class="a" style="left:828px;top:75px;width:14px;height:15px;background:#874021;border:1px solid #efe0d0"></div>
<!-- R G B labels -->
<div class="p" style="left:855px;top:75px;font-size:9px;color:#e8e8e8">R</div>
<div class="p" style="left:855px;top:95px;font-size:9px;color:#e8e8e8">G</div>
<div class="p" style="left:855px;top:114px;font-size:9px;color:#e8e8e8">B</div>
<!-- sliders -->
<div class="a" style="left:866px;top:76px;width:61px;height:5px;background:linear-gradient(90deg,#004021,#ff4021);border:1px solid #6a6a6a"></div>
<div class="a" style="left:866px;top:95px;width:61px;height:5px;background:linear-gradient(90deg,#870021,#87ff21);border:1px solid #6a6a6a"></div>
<div class="a" style="left:866px;top:113px;width:61px;height:5px;background:linear-gradient(90deg,#874000,#8740ff);border:1px solid #6a6a6a"></div>
<svg style="left:894px;top:82px" width="8" height="6"><path d="M4 0L8 6H0Z" fill="#c8c8c8"/></svg>
<svg style="left:877px;top:101px" width="8" height="6"><path d="M4 0L8 6H0Z" fill="#c8c8c8"/></svg>
<svg style="left:870px;top:119px" width="8" height="6"><path d="M4 0L8 6H0Z" fill="#c8c8c8"/></svg>
<!-- inputs -->
<div class="a" style="left:930px;top:75px;width:37px;height:14px;background:#3c3c3c;border:1px solid #474747"></div>
<div class="a" style="left:930px;top:94px;width:37px;height:13px;background:#3c3c3c;border:1px solid #474747"></div>
<div class="a" style="left:930px;top:112px;width:37px;height:14px;background:#3c3c3c;border:1px solid #474747"></div>
<div class="p" style="left:933px;top:77px;font-size:10px;color:#f0f0f0">135</div>
<div class="p" style="left:933px;top:95px;font-size:10px;color:#f0f0f0">64</div>
<div class="p" style="left:933px;top:113px;font-size:10px;color:#f0f0f0">33</div>
<!-- spectrum -->
<div class="a" style="left:827px;top:133px;width:148px;height:13px;background:#3a3a3a"></div>
<div class="a" style="left:828px;top:134px;width:140px;height:11px;background:linear-gradient(90deg,#e8301c 0%,#f0c030 16%,#b0d030 23%,#18a040 33%,#20a890 44%,#38b0e8 52%,#1060c0 60%,#101a78 67%,#7a1ea0 75%,#e02090 85%,#e01840 94%,#e01020 100%)"></div>
<div class="a" style="left:828px;top:134px;width:140px;height:11px;background:linear-gradient(rgba(255,255,255,0.9),rgba(255,255,255,0) 40%,rgba(0,0,0,0) 55%,rgba(0,0,0,0.9))"></div>
<div class="a" style="left:968px;top:134px;width:6px;height:5px;background:#fff"></div>
<div class="a" style="left:968px;top:139px;width:6px;height:6px;background:#000"></div>
<div class="a" style="left:823px;top:148px;width:177px;height:3px;background:#2e2e2e"></div>

<!-- ===== ADJUSTMENTS PANEL ===== -->
<div class="a" style="left:823px;top:151px;width:177px;height:12px;background:#3c3c3c"></div>
<div class="a" style="left:823px;top:151px;width:28px;height:12px;background:#535353"></div>
<div class="a" style="left:851px;top:151px;width:1px;height:12px;background:#2e2e2e"></div>
<div class="a" style="left:852px;top:151px;width:25px;height:12px;background:#424242"></div>
<div class="a" style="left:877px;top:151px;width:1px;height:12px;background:#2e2e2e"></div>
<div class="p" style="left:828px;top:151px;color:#e8e8e8">调整</div>
<div class="p" style="left:856px;top:151px;color:#b8b8b8">样式</div>
<svg style="left:986px;top:155px" width="11" height="6"><path d="M0 1h5L2.5 4Z" fill="#e0e0e0"/><rect x="6" y="0" width="5" height="6" fill="#8a8a8a"/></svg>
<div class="a" style="left:823px;top:163px;width:177px;height:82px;background:#535353"></div>
<div class="p" style="left:831px;top:168px;font-size:9px;color:#f0f0f0">添加调整</div>
<svg style="left:858px;top:186px" width="13" height="13" viewBox="0 0 13 13"><circle cx="6.5" cy="6.5" r="2.8" fill="none" stroke="#d0d0d0" stroke-width="1.3"/><path d="M6.5 0v2M6.5 11v2M0 6.5h2M11 6.5h2M1.8 1.8l1.3 1.3M9.9 9.9l1.3 1.3M11.2 1.8l-1.3 1.3M1.8 11.2l1.3-1.3" stroke="#d0d0d0" stroke-width="1.1"/></svg>
<svg style="left:877px;top:187px" width="13" height="11" viewBox="0 0 13 11"><path d="M0.5 10.5V7L2 5L3 7L4 3L5 6L6 2L7 5L8 1L9 4L10 3L11 6L12.5 4V10.5Z" fill="#d0d0d0"/><path d="M0 10.5h13" stroke="#eee"/></svg>
<svg style="left:894px;top:187px" width="12" height="11" viewBox="0 0 12 11"><rect x="0.5" y="0.5" width="11" height="10" fill="#6a6a6a" stroke="#d0d0d0"/><path d="M0.5 4h11M0.5 7h11M4 0.5v10M8 0.5v10" stroke="#9a9a9a" stroke-width="0.8"/><path d="M1 10Q6 9 7 5T11 1" stroke="#eee" stroke-width="1.3" fill="none"/></svg>
<svg style="left:912px;top:187px" width="12" height="11" viewBox="0 0 12 11"><rect x="0.5" y="0.5" width="11" height="10" fill="#7a7a7a" stroke="#d0d0d0"/><path d="M1 10L11 1V10Z" fill="#8a8a8a"/><path d="M1 10L11 1" stroke="#333" stroke-width="1.2"/><path d="M2 3h3M3.5 1.5v3M7 8h3" stroke="#eee"/></svg>
<svg style="left:929px;top:187px" width="12" height="11" viewBox="0 0 12 11"><path d="M1 1H11L6 10Z" fill="#6a6a6a" stroke="#d0d0d0" stroke-width="1.4"/></svg>
<svg style="left:850px;top:207px" width="12" height="11" viewBox="0 0 12 11"><rect x="0.5" y="0.5" width="11" height="10" fill="#9a9a9a" stroke="#d0d0d0"/><path d="M1 3h10M4 1v5M8 1v5" stroke="#555" stroke-width="0.8"/><rect x="1" y="6" width="10" height="4" fill="#b0b0b0"/><rect x="1" y="7" width="3" height="3" fill="#222"/></svg>
<svg style="left:867px;top:207px" width="13" height="11" viewBox="0 0 13 11"><path d="M6.5 0v10M2 2h9M3 10h7" stroke="#d0d0d0" stroke-width="1.2"/><path d="M0 6.5L2 2L4 6.5Z M9 6.5L11 2L13 6.5Z" fill="none" stroke="#d0d0d0"/><path d="M0 6.5a2 1.5 0 0 0 4 0ZM9 6.5a2 1.5 0 0 0 4 0Z" fill="#d0d0d0"/></svg>
<svg style="left:885px;top:207px" width="12" height="11" viewBox="0 0 12 11"><rect x="0.5" y="0.5" width="11" height="10" fill="#aaa" stroke="#d0d0d0"/><rect x="1" y="1" width="5" height="9" fill="#4a4a4a"/><rect x="6" y="1" width="5" height="9" fill="#c4c4c4"/></svg>
<svg style="left:903px;top:206px" width="13" height="12" viewBox="0 0 13 12"><rect x="0.5" y="1.5" width="8" height="6" fill="#888" stroke="#d0d0d0"/><rect x="2" y="0" width="3" height="2" fill="#d0d0d0"/><circle cx="8.5" cy="8" r="3.6" fill="#6a6a6a" stroke="#d0d0d0" stroke-width="1.2"/></svg>
<svg style="left:920px;top:207px" width="12" height="11" viewBox="0 0 12 11"><circle cx="6" cy="3.5" r="3.2" fill="#d4d4d4"/><circle cx="3.6" cy="7.3" r="3.2" fill="#c8c8c8"/><circle cx="8.4" cy="7.3" r="3.2" fill="#cccccc"/><path d="M6 4.5V6.5L4 8.5M6 6.5L8 8.5" stroke="#444" stroke-width="1.1" fill="none"/></svg>
<svg style="left:938px;top:207px" width="12" height="11" viewBox="0 0 12 11"><rect x="0.5" y="0.5" width="11" height="10" fill="#444" stroke="#d0d0d0"/><path d="M1 2h10M1 5.5h10M1 9h10" stroke="#ccc" stroke-width="1.5" stroke-dasharray="2 1"/></svg>
<svg style="left:859px;top:227px" width="12" height="11" viewBox="0 0 12 11"><rect x="0.5" y="0.5" width="11" height="10" fill="#888" stroke="#d0d0d0"/><path d="M2 9C3 3 9 8 10 2" stroke="#333" stroke-width="2.5" fill="none"/></svg>
<svg style="left:877px;top:227px" width="12" height="11" viewBox="0 0 12 11"><rect x="0.5" y="0.5" width="11" height="10" fill="#999" stroke="#d0d0d0"/><path d="M1 9L9 1H11V3L3 10H1Z" fill="#555"/></svg>
<svg style="left:894px;top:227px" width="12" height="11" viewBox="0 0 12 11"><rect x="0.5" y="0.5" width="11" height="10" fill="#bbb" stroke="#d0d0d0"/><path d="M1 8L4 5L6 6L11 2V5L6 8L4 7L1 10Z" fill="#333"/></svg>
<svg style="left:912px;top:227px" width="12" height="11" viewBox="0 0 12 11"><rect x="0.5" y="0.5" width="11" height="10" fill="#888" stroke="#d0d0d0"/><path d="M1 1L6 5.5L1 10ZM11 1L6 5.5L11 10Z" fill="#aaa"/></svg>
<svg style="left:929px;top:227px" width="12" height="11" viewBox="0 0 12 11"><defs><linearGradient id="gm"><stop offset="0" stop-color="#222"/><stop offset="1" stop-color="#ddd"/></linearGradient></defs><rect x="0.5" y="0.5" width="11" height="10" fill="url(#gm)" stroke="#d0d0d0"/></svg>
<div class="a" style="left:823px;top:245px;width:177px;height:3px;background:#2e2e2e"></div>

<!-- ===== LAYERS PANEL ===== -->
<div class="a" style="left:823px;top:248px;width:177px;height:12px;background:#3c3c3c"></div>
<div class="a" style="left:823px;top:248px;width:28px;height:12px;background:#535353"></div>
<div class="a" style="left:851px;top:248px;width:1px;height:12px;background:#2e2e2e"></div>
<div class="a" style="left:852px;top:248px;width:25px;height:12px;background:#424242"></div>
<div class="a" style="left:877px;top:248px;width:1px;height:12px;background:#2e2e2e"></div>
<div class="a" style="left:878px;top:248px;width:27px;height:12px;background:#424242"></div>
<div class="a" style="left:905px;top:248px;width:1px;height:12px;background:#2e2e2e"></div>
<div class="p" style="left:828px;top:248px;color:#e8e8e8">图层</div>
<div class="p" style="left:856px;top:248px;color:#b8b8b8">通道</div>
<div class="p" style="left:884px;top:248px;color:#b8b8b8">路径</div>
<svg style="left:986px;top:252px" width="11" height="6"><path d="M0 1h5L2.5 4Z" fill="#e0e0e0"/><rect x="6" y="0" width="5" height="6" fill="#8a8a8a"/></svg>
<div class="a" style="left:823px;top:260px;width:177px;height:272px;background:#535353"></div>
<!-- filter row -->
<div class="a" style="left:828px;top:263px;width:50px;height:14px;background:linear-gradient(#5a5a5a,#525252);border:1px solid #474747;border-radius:2px"></div>
<svg style="left:831px;top:266px" width="8" height="8"><circle cx="5" cy="3" r="2.3" fill="none" stroke="#8a8a8a" stroke-width="1.2"/><path d="M3.5 4.5L1 7" stroke="#8a8a8a" stroke-width="1.3"/></svg>
<div class="p" style="left:842px;top:264px;font-size:9px;color:#8e8e8e">类型</div>
<svg style="left:872px;top:266px" width="4" height="8"><path d="M0 3L2 0L4 3Z M0 5L2 8L4 5Z" fill="#8a8a8a"/></svg>
<svg style="left:894px;top:265px" width="11" height="10"><rect x="0.5" y="0.5" width="10" height="9" fill="none" stroke="#7c7c7c"/><path d="M1 8L4 5L6 7L8 4L10 8Z" fill="#7c7c7c"/></svg>
<svg style="left:911px;top:265px" width="10" height="10"><circle cx="5" cy="5" r="4.3" fill="#7a7a7a"/><path d="M2 8L8 2" stroke="#535353" stroke-width="1.5"/></svg>
<div class="p" style="left:928px;top:263px;font-size:11px;color:#7c7c7c;font-family:'Liberation Serif',serif">T</div>
<svg style="left:944px;top:265px" width="10" height="10"><rect x="2.5" y="2.5" width="5" height="5" fill="none" stroke="#7c7c7c"/><path d="M0 2.5h10M0 7.5h10M2.5 0v10M7.5 0v10" stroke="#7c7c7c" stroke-dasharray="1 1"/></svg>
<svg style="left:964px;top:264px" width="11" height="12"><path d="M3 0.5h5v5h-5zM0.5 4.5h5v5h-5z" fill="none" stroke="#7c7c7c"/><rect x="1" y="8" width="4" height="3" fill="#7c7c7c"/></svg>
<div class="a" style="left:990px;top:263px;width:6px;height:15px;background:#4e4e4e;border:1px solid #5c5c5c"></div>
<div class="a" style="left:823px;top:280px;width:177px;height:1px;background:#464646"></div>
<!-- blend row -->
<div class="a" style="left:828px;top:284px;width:80px;height:13px;background:linear-gradient(#595959,#515151);border:1px solid #474747;border-radius:2px"></div>
<div class="p" style="left:832px;top:284px;font-size:9px;color:#9a9a9a">正常</div>
<svg style="left:900px;top:287px" width="4" height="8"><path d="M0 3L2 0L4 3Z M0 5L2 8L4 5Z" fill="#8a8a8a"/></svg>
<div class="p" style="left:913px;top:284px;font-size:9px;color:#9a9a9a">不透明度<span style="margin-left:1px">:</span></div>
<div class="a" style="left:955px;top:284px;width:26px;height:14px;background:#4e4e4e"></div>
<div class="p" style="left:957px;top:285px;font-size:9px;color:#9a9a9a;letter-spacing:-0.3px">100%</div>
<div class="a" style="left:982px;top:284px;width:12px;height:14px;background:#5a5a5a;border:1px solid #4a4a4a"></div>
<svg style="left:985px;top:290px" width="5" height="3"><path d="M0 0H5L2.5 3Z" fill="#9a9a9a"/></svg>
<div class="a" style="left:823px;top:301px;width:177px;height:1px;background:#464646"></div>
<!-- lock row -->
<div class="p" style="left:829px;top:305px;font-size:9px;color:#9a9a9a">锁定<span style="margin-left:1px">:</span></div>
<svg style="left:856px;top:306px" width="8" height="8"><rect width="8" height="8" fill="#767676"/><path d="M0 0h2v2h-2zM4 0h2v2h-2zM2 2h2v2h-2zM6 2h2v2h-2zM0 4h2v2h-2zM4 4h2v2h-2zM2 6h2v2h-2zM6 6h2v2h-2z" fill="#5a5a5a"/></svg>
<svg style="left:871px;top:305px" width="11" height="10"><path d="M10 0L4 7" stroke="#808080" stroke-width="1.3"/><path d="M0 10Q1 6 4 7Q5 9 0 10Z" fill="#808080"/></svg>
<svg style="left:887px;top:305px" width="10" height="10"><path d="M5 0v10M0 5h10" stroke="#808080"/><path d="M5 0L3 2h4ZM5 10L3 8h4ZM0 5L2 3v4ZM10 5L8 3v4Z" fill="#808080"/></svg>
<svg style="left:904px;top:305px" width="8" height="10"><path d="M2 4V2.5a2 2 0 0 1 4 0V4" stroke="#808080" fill="none" stroke-width="1.2"/><rect x="0.5" y="4.5" width="7" height="5" fill="none" stroke="#808080"/></svg>
<div class="p" style="left:931px;top:305px;font-size:9px;color:#9a9a9a">填充<span style="margin-left:1px">:</span></div>
<div class="a" style="left:955px;top:304px;width:26px;height:14px;background:#4a4a4a"></div>
<div class="p" style="left:957px;top:305px;font-size:9px;color:#9a9a9a;letter-spacing:-0.3px">100%</div>
<div class="a" style="left:982px;top:305px;width:12px;height:13px;background:#5a5a5a;border:1px solid #4a4a4a"></div>
<svg style="left:985px;top:311px" width="5" height="3"><path d="M0 0H5L2.5 3Z" fill="#9a9a9a"/></svg>
<!-- layer row -->
<div class="a" style="left:823px;top:321px;width:177px;height:1px;background:#3e3e3e"></div>
<div class="a" style="left:823px;top:322px;width:22px;height:30px;background:#535353"></div>
<div class="a" style="left:845px;top:322px;width:143px;height:30px;background:#5b6b7e"></div>
<div class="a" style="left:988px;top:322px;width:12px;height:210px;background:#454545"></div>
<div class="a" style="left:997px;top:55px;width:3px;height:477px;background:#3c3c3c"></div>
<svg style="left:831px;top:334px" width="10" height="7"><path d="M0.5 3.5Q5 -1.5 9.5 3.5Q5 8.5 0.5 3.5Z" fill="#c8c8c8"/><circle cx="5" cy="3.5" r="1.7" fill="#3a3a3a"/></svg>
<div class="a" style="left:848px;top:325px;width:24px;height:24px;background:#fff;border:1px solid #2a2a2a"></div>
<div class="p" style="left:881px;top:332px;font-size:9px;color:#f0f0f0;font-style:italic">背景</div>
<svg style="left:968px;top:332px" width="9" height="10"><path d="M2.5 4.5V3a2 2 0 0 1 4 0V4.5" stroke="#e0e0e0" fill="none" stroke-width="1.2"/><rect x="0.5" y="4.5" width="8" height="5" fill="none" stroke="#e0e0e0"/><rect x="4" y="6" width="1" height="2" fill="#e0e0e0"/></svg>
<div class="a" style="left:823px;top:352px;width:165px;height:1px;background:#3e3e3e"></div>
<div class="a" style="left:823px;top:353px;width:165px;height:179px;background:#474747"></div>

</body></html>
